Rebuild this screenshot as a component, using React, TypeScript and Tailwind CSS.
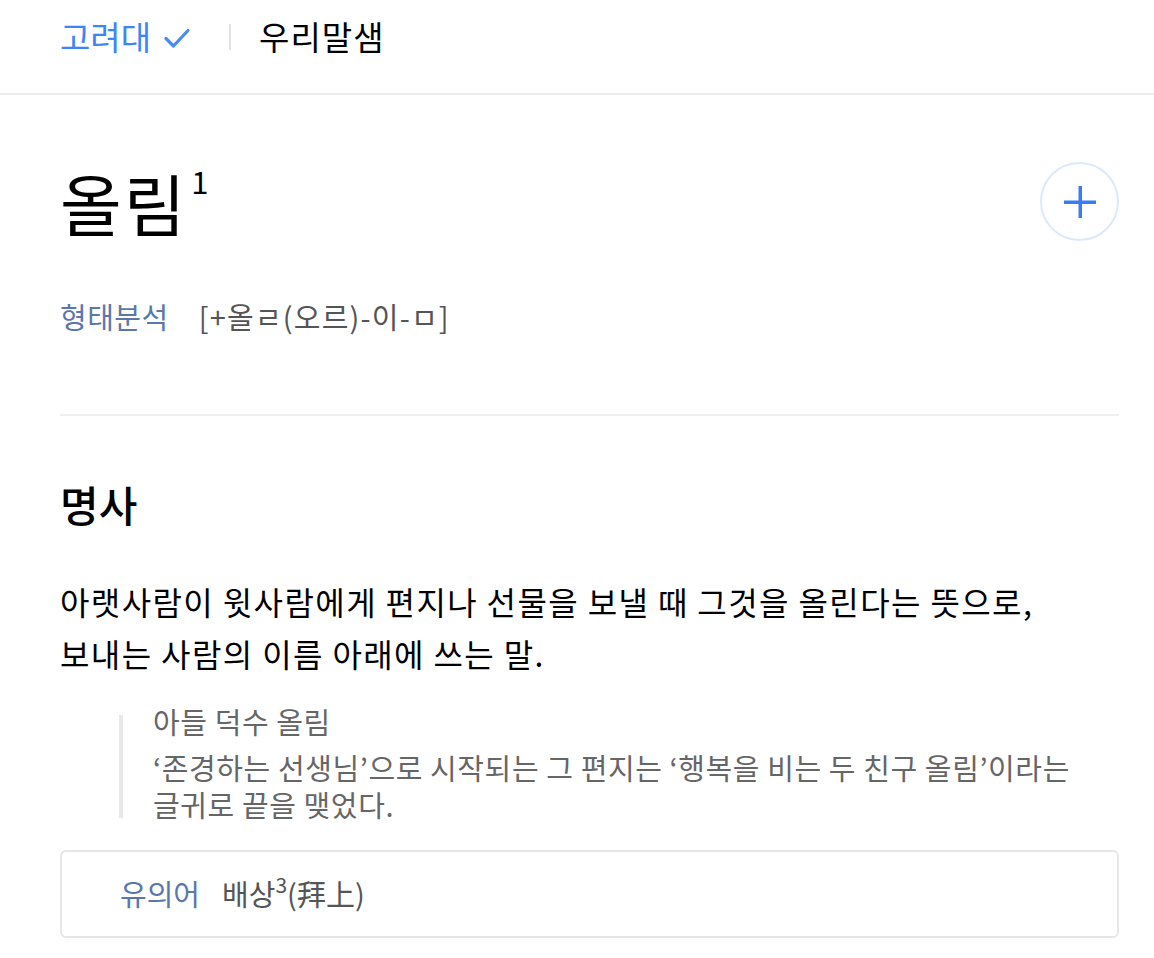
const FONT = "font-['Noto_Sans_CJK_KR','Noto_Sans',sans-serif]";

function CheckIcon() {
  return (
    <svg width="28" height="22" viewBox="0 0 28 22" fill="none">
      <path d="M3 11.5 L10.5 19 L25 3.5" stroke="#4a8af4" strokeWidth="3.2" strokeLinecap="round" strokeLinejoin="round" />
    </svg>
  );
}

function PlusIcon() {
  return (
    <svg width="34" height="34" viewBox="0 0 34 34">
      <rect x="15.5" y="1" width="3.5" height="32" fill="#3b7cf5" />
      <rect x="1" y="15.5" width="32" height="3.5" fill="#3b7cf5" />
    </svg>
  );
}

export default function App() {
  return (
    <div className={`${FONT} min-h-screen bg-white text-black`}>
      {/* Top bar */}
      <header className="h-[95px] border-b-2 border-[#ececec] px-[60px] flex items-center pb-[20px]">
        <span className="text-[33px] leading-none text-[#3d85f6]">고려대</span>
        <span className="ml-[12px] mt-[2px]">
          <CheckIcon />
        </span>
        <span className="ml-[38px] w-[2px] h-[26px] bg-[#e3e3e3]" />
        <span className="ml-[28px] text-[33px] tracking-[1px] leading-none text-black">우리말샘</span>
      </header>

      <main className="pl-[60px] pr-[35px]">
        {/* Headword */}
        <div className="pt-[62px] flex items-start justify-between">
          <h1 className="text-[67px] tracking-[2px] leading-[90px] font-normal flex items-start">
            올림
            <span className="text-[31px] tracking-normal leading-none ml-[4px] mt-[8px]">1</span>
          </h1>
          <button className="mt-[5px] w-[79px] h-[79px] rounded-full border-2 border-[#dde9fb] flex items-center justify-center">
            <PlusIcon />
          </button>
        </div>

        <div className="mt-[49px] flex items-center text-[29px] tracking-[0.5px] leading-[40px]">
          <span className="text-[#5a78ab]">형태분석</span>
          <span className="ml-[30px] text-[#555555] tracking-[1.2px]">[+올ㄹ(오르)-이-ㅁ]</span>
        </div>

        <div className="mt-[78px] w-[1059px] h-[2px] bg-[#efefef]" />

        {/* Sense */}
        <h2 className="mt-[58px] text-[42px] leading-[60px] font-medium">명사</h2>

        <p className="mt-[41px] text-[32px] tracking-[1.4px] leading-[52px] text-black w-[1059px]">
          아랫사람이 윗사람에게 편지나 선물을 보낼 때 그것을 올린다는 뜻으로,
          <br />
          보내는 사람의 이름 아래에 쓰는 말.
        </p>

        <div className="mt-[36px] ml-[59px] flex flex-col border-l-[4px] border-[#e8e8e8] pl-[30px] text-[29px] tracking-[0.6px] text-[#666666]">
          <p className="leading-[37px] -mt-[12px] mb-[9px]">아들 덕수 올림</p>
          <p className="leading-[37px] -mb-[5px]">
            ‘존경하는 선생님’으로 시작되는 그 편지는 ‘행복을 비는 두 친구 올림’이라는
            <br />
            글귀로 끝을 맺었다.
          </p>
        </div>

        <div className="mt-[32px] w-[1059px] h-[88px] rounded-[6px] border-2 border-[#e6e6e6] flex items-center pl-[58px] text-[29px]">
          <span className="text-[#5a78ab]">유의어</span>
          <span className="ml-[22px] text-[#555555] flex items-start">
            배상
            <span className="text-[21px] leading-none mt-[2px]">3</span>
            (拜上)
          </span>
        </div>
      </main>
    </div>
  );
}
